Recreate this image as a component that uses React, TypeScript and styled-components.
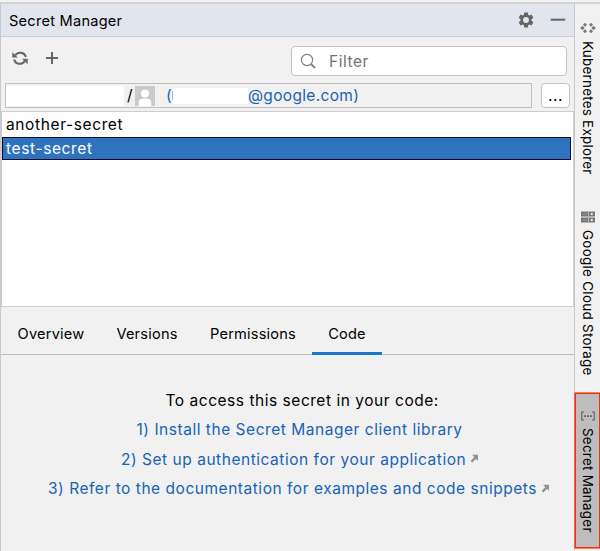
import React from 'react';
import styled, { createGlobalStyle } from 'styled-components';

const GlobalStyle = createGlobalStyle`
  * { box-sizing: border-box; }
  body {
    margin: 0;
    background: #f1f1f1;
    color: #000;
    font-family: Inter, 'Liberation Sans', sans-serif;
  }
`;

const Frame = styled.div`
  display: flex;
  width: 600px;
  height: 551px;
  overflow: hidden;
  background: #f1f1f1;
  border-top: 2px solid #f1f1f1;
`;

const Panel = styled.main`
  display: flex;
  flex-direction: column;
  width: 574px;
  border-top: 2px solid #d5d5d5;
  border-left: 1px solid #c9c9c9;
`;

const Header = styled.header`
  display: flex;
  align-items: center;
  height: 33px;
  flex: none;
  padding: 0 8px;
  background: #e1e5ed;
  border-bottom: 1px solid #cfcfcf;
`;

const Title = styled.h1`
  flex: 1;
  margin: 0;
  padding-top: 2px;
  font-size: 14.6px;
  font-weight: 400;
  line-height: 31px;
  letter-spacing: 0.24px;
`;

const HeaderIcons = styled.div`
  display: flex;
  align-items: center;
  gap: 16px;
`;

const Toolbar = styled.div`
  display: flex;
  align-items: flex-start;
  height: 46px;
  flex: none;
  padding: 9px 7px 0 10px;
`;

const Actions = styled.div`
  display: flex;
  flex: 1;
  gap: 14px;
  padding-top: 3px;
`;

const Search = styled.label`
  display: flex;
  align-items: center;
  gap: 13px;
  width: 276px;
  height: 30px;
  padding-left: 8px;
  background: #fff;
  border: 1px solid #c3c3c3;
  border-radius: 4px;
  color: #727272;
  font-size: 15.5px;
  letter-spacing: 0.55px;
`;

const AccountRow = styled.div`
  display: flex;
  gap: 9px;
  height: 28px;
  flex: none;
  padding-left: 4px;
`;

const Account = styled.div`
  display: flex;
  align-items: center;
  width: 527px;
  height: 25px;
  border: 1px solid #bfbfbf;
  color: #1763b6;
  font-size: 15.5px;
  letter-spacing: 0.33px;
`;

const Redacted = styled.span<{ $width: number; $height: number }>`
  width: ${(p) => p.$width}px;
  height: ${(p) => p.$height}px;
  background: #fff;
`;

const Slash = styled.span`
  width: 11px;
  padding-left: 3px;
  color: #000;
`;

const Paren = styled.span`
  width: 6px;
  margin-left: 11px;
`;

const Clipped = styled.span`
  width: 1px;
  height: 9px;
  background: #9fbfe0;
`;

const MoreButton = styled.button`
  display: flex;
  align-items: center;
  justify-content: center;
  width: 29px;
  height: 25px;
  padding: 0;
  background: #fff;
  border: 1px solid #c3c3c3;
  border-radius: 4px;
  color: #000;
  font: 15.5px Inter, sans-serif;
  letter-spacing: 0.5px;
`;

const SecretList = styled.ul`
  height: 196px;
  flex: none;
  margin: 0;
  padding: 1px 2px 0 0;
  list-style: none;
  background: #fff;
  border: 1px solid #cdcdcd;
`;

const Secret = styled.li<{ $selected?: boolean }>`
  height: ${(p) => (p.$selected ? 23 : 24)}px;
  padding-left: ${(p) => (p.$selected ? 3 : 4)}px;
  font-size: 15.5px;
  line-height: ${(p) => (p.$selected ? 21 : 23)}px;
  letter-spacing: 0.62px;
  color: ${(p) => (p.$selected ? '#fff' : '#000')};
  background: ${(p) => (p.$selected ? '#2f73be' : 'transparent')};
  border: ${(p) => (p.$selected ? '1px solid #050a30' : '0')};
`;

const Tabs = styled.nav`
  display: flex;
  height: 48px;
  flex: none;
  padding-left: 1px;
  border-bottom: 1px solid #bdbdbd;
`;

const Tab = styled.div<{ $width: number; $active?: boolean }>`
  display: flex;
  justify-content: center;
  width: ${(p) => p.$width}px;
  height: 48px;
  font-size: 14.6px;
  line-height: 54px;
  letter-spacing: 0.2px;
  border-bottom: ${(p) => (p.$active ? '3px solid #1b78ce' : '0')};
`;

const Instructions = styled.section`
  display: flex;
  flex-direction: column;
  padding-top: 30.5px;
  font-size: 15.5px;
  line-height: 29.6px;
`;

const Line = styled.div<{ $left: number; $link?: boolean }>`
  display: flex;
  align-items: center;
  gap: 4px;
  padding-left: ${(p) => p.$left}px;
  white-space: nowrap;
  letter-spacing: 0.53px;
  color: ${(p) => (p.$link ? '#1763b6' : '#000')};
`;

const Stripe = styled.aside`
  display: flex;
  flex-direction: column;
  width: 26px;
  border-top: 2px solid #d5d5d5;
  border-left: 1px solid #c9c9c9;
`;

const ToolWindow = styled.div<{ $height: number; $top: number; $active?: boolean }>`
  display: flex;
  flex-direction: column;
  align-items: center;
  flex: none;
  gap: 7px;
  width: 25px;
  height: ${(p) => p.$height}px;
  padding-top: ${(p) => p.$top}px;
  background: ${(p) => (p.$active ? '#bdbdbd' : 'transparent')};
  box-shadow: ${(p) => (p.$active ? 'inset 0 0 0 1px #f0300f, 0 0 0 0.6px #f0300f' : 'none')};
`;

const VerticalLabel = styled.span<{ $spacing: number }>`
  writing-mode: vertical-rl;
  width: 18px;
  font-size: 13.4px;
  line-height: 18px;
  letter-spacing: ${(p) => p.$spacing}px;
  white-space: nowrap;
`;

const GearIcon = () => (
  <svg width="16" height="16" viewBox="0 0 16 16">
    <path
      fill="#646464"
      fillRule="evenodd"
      d="M6.2.5h3.6l.4 2.3 1.1.6L13.5 2.6l1.8 3.1-1.8 1.5v1.6l1.8 1.5-1.8 3.1-2.2-.8-1.1.6-.4 2.3H6.2l-.4-2.3-1.1-.6-2.2.8-1.8-3.1 1.8-1.5V7.2L.7 5.7l1.8-3.1 2.2.8 1.1-.6zM8 5a3 3 0 1 0 0 6a3 3 0 0 0 0-6z"
    />
  </svg>
);

const MinusIcon = () => (
  <svg width="16" height="16" viewBox="0 0 16 16">
    <rect x="0.7" y="6.7" width="14.5" height="2" fill="#646464" />
  </svg>
);

const RefreshIcon = () => (
  <svg width="18" height="18" viewBox="0 0 18 18" fill="none" stroke="#646464" strokeWidth="2">
    <path d="M4.3 6.3A5.9 5.9 0 0 1 14.9 8M13.7 12.1A5.9 5.9 0 0 1 3.1 10.4" />
    <path d="M1.3 3.2V8.6h5.6zM16.7 15.2V9.8h-5.6z" fill="#646464" stroke="none" />
  </svg>
);

const PlusIcon = () => (
  <svg width="18" height="18" viewBox="0 0 18 18">
    <path d="M9 3v12M3 9h12" stroke="#646464" strokeWidth="2" />
  </svg>
);

const SearchIcon = () => (
  <svg width="16" height="16" viewBox="0 0 16 16" fill="none" stroke="#7a838b">
    <circle cx="7" cy="7" r="5.6" strokeWidth="1.2" />
    <path d="M11 11l4 4" strokeWidth="1.8" />
  </svg>
);

const AvatarIcon = () => (
  <svg width="20" height="20" viewBox="0 0 20 20">
    <rect width="20" height="20" fill="#cacaca" />
    <circle cx="10" cy="7.5" r="4" fill="#fff" />
    <path d="M3.7 20v-4c0-2.5 2.8-3.5 6.3-3.5s6.3 1 6.3 3.5v4z" fill="#fff" />
  </svg>
);

const ExternalIcon = () => (
  <svg width="8" height="10" viewBox="0 0 8 10">
    <path d="M2 .8H8v6L6 4.9 2.2 8.6.6 7.1 4.3 3.1z" fill="#8a949a" />
  </svg>
);

const KubernetesIcon = () => (
  <svg width="16" height="12" viewBox="0 0 16 12" fill="#777">
    <path d="M5 .7L7 2.7 5 4.7 3 2.7zM2.4 3.8L4.6 6 2.4 8.2.2 6zM5 7.3l2 2-2 2-2-2z" />
    <path d="M11 .7l2 2-2 2-2-2zM13.6 3.8L15.8 6l-2.2 2.2L11.4 6zM11 7.3l2 2-2 2-2-2z" />
  </svg>
);

const StorageIcon = () => (
  <svg width="16" height="12" viewBox="0 0 16 12">
    <path d="M1 .5h14v5H1zM1 6.5h14v5H1z" fill="#777" />
    <path d="M3 3h4M3 9h4" stroke="#999" />
    <path d="M8.5 1.2v3.6M8.5 7.2v3.6" stroke="#c8c8c8" strokeWidth=".8" />
    <circle cx="11.8" cy="3" r="1.1" fill="#fff" />
    <circle cx="11.8" cy="9" r="1.1" fill="#fff" />
  </svg>
);

const SecretIcon = () => (
  <svg width="16" height="10" viewBox="0 0 16 10">
    <path d="M4 1H1.8v8H4M12 1h2.2v8H12" fill="none" stroke="#666" strokeWidth="1.2" />
    <path d="M4 4.2h2v1.7H4zM7 4.2h2v1.7H7zM10 4.2h2v1.7h-2z" fill="#666" />
  </svg>
);

export default function App() {
  return (
    <>
      <GlobalStyle />
      <Frame>
        <Panel>
          <Header>
            <Title>Secret Manager</Title>
            <HeaderIcons>
              <GearIcon />
              <MinusIcon />
            </HeaderIcons>
          </Header>
          <Toolbar>
            <Actions>
              <RefreshIcon />
              <PlusIcon />
            </Actions>
            <Search>
              <SearchIcon />
              Filter
            </Search>
          </Toolbar>
          <AccountRow>
            <Account>
              <Redacted $width={118} $height={20} />
              <Slash>/</Slash>
              <AvatarIcon />
              <Paren>(</Paren>
              <Clipped />
              <Redacted $width={75} $height={16} />
              @google.com)
            </Account>
            <MoreButton>...</MoreButton>
          </AccountRow>
          <SecretList>
            <Secret>another-secret</Secret>
            <Secret $selected>test-secret</Secret>
          </SecretList>
          <Tabs>
            <Tab $width={98}>Overview</Tab>
            <Tab $width={94}>Versions</Tab>
            <Tab $width={118}>Permissions</Tab>
            <Tab $width={70} $active>Code</Tab>
          </Tabs>
          <Instructions>
            <Line $left={164.5}>To access this secret in your code:</Line>
            <Line $left={135.5} $link>1) Install the Secret Manager client library</Line>
            <Line $left={120} $link>
              2) Set up authentication for your application
              <ExternalIcon />
            </Line>
            <Line $left={47} $link>
              3) Refer to the documentation for examples and code snippets
              <ExternalIcon />
            </Line>
          </Instructions>
        </Panel>
        <Stripe>
          <ToolWindow $height={190} $top={18}>
            <KubernetesIcon />
            <VerticalLabel $spacing={0.25}>Kubernetes Explorer</VerticalLabel>
          </ToolWindow>
          <ToolWindow $height={199} $top={17}>
            <StorageIcon />
            <VerticalLabel $spacing={0.31}>Google Cloud Storage</VerticalLabel>
          </ToolWindow>
          <ToolWindow $height={155} $top={18} $active>
            <SecretIcon />
            <VerticalLabel $spacing={0.27}>Secret Manager</VerticalLabel>
          </ToolWindow>
        </Stripe>
      </Frame>
    </>
  );
}
